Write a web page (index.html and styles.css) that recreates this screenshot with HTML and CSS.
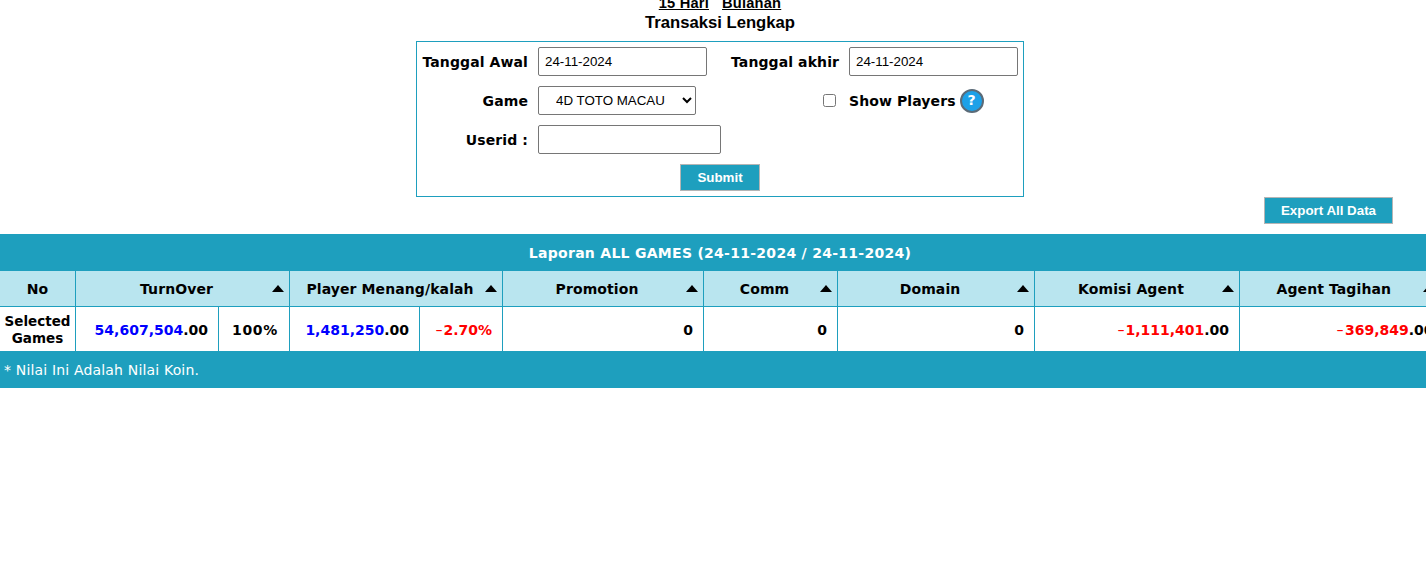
FILE: index.html
```html
<!DOCTYPE html>
<html>
<head>
<meta charset="utf-8">
<title>Transaksi Lengkap</title>
<link rel="stylesheet" href="styles.css">
</head>
<body>
<div class="links"><a href="#">15 Hari</a><a href="#">Bulanan</a></div>
<div class="title">Transaksi Lengkap</div>
<form class="filter">
  <div class="row">
    <label class="lbl">Tanggal Awal</label>
    <input class="field date" type="text" value="24-11-2024">
    <label class="lbl lbl2">Tanggal akhir</label>
    <input class="field date" type="text" value="24-11-2024">
  </div>
  <div class="row">
    <label class="lbl">Game</label>
    <select class="field game"><option>4D TOTO MACAU</option></select>
    <input class="check" type="checkbox">
    <label class="lbl show">Show Players</label>
    <span class="help">?</span>
  </div>
  <div class="row">
    <label class="lbl">Userid :</label>
    <input class="field user" type="text">
  </div>
  <div class="submit-row"><button class="btn submit" type="button">Submit</button></div>
</form>
<div class="export-row"><button class="btn export" type="button">Export All Data</button></div>
<div class="report">
  <div class="band head-band">Laporan ALL GAMES (24-11-2024 / 24-11-2024)</div>
  <table>
    <colgroup>
      <col class="c1"><col class="c2"><col class="c3"><col class="c4"><col class="c5"><col class="c6"><col class="c7"><col class="c8"><col class="c9"><col class="c10">
    </colgroup>
    <thead>
      <tr>
        <th class="plain">No</th>
        <th colspan="2" class="sort">TurnOver<i></i></th>
        <th colspan="2" class="sort">Player Menang/kalah<i></i></th>
        <th class="sort">Promotion<i></i></th>
        <th class="sort">Comm<i></i></th>
        <th class="sort">Domain<i></i></th>
        <th class="sort">Komisi Agent<i></i></th>
        <th class="sort">Agent Tagihan<i></i></th>
      </tr>
    </thead>
    <tbody>
      <tr>
        <td class="name">Selected Games</td>
        <td><span class="blue">54,607,504</span>.00</td>
        <td class="pct">100%</td>
        <td><span class="blue">1,481,250</span>.00</td>
        <td><span class="red"><span class="minus">-</span>2.70%</span></td>
        <td>0</td>
        <td>0</td>
        <td>0</td>
        <td><span class="red"><span class="minus">-</span>1,111,401</span>.00</td>
        <td class="last"><span class="red"><span class="minus">-</span>369,849</span>.00</td>
      </tr>
    </tbody>
  </table>
  <div class="band foot-band">* Nilai Ini Adalah Nilai Koin.</div>
</div>
</body>
</html>
```
FILE: styles.css
```css
html, body { margin: 0; padding: 0; background: #fff; }
html { width: 1426px; height: 567px; overflow: hidden; }
body { width: 1440px; height: 567px; font-family: "DejaVu Sans", Verdana, sans-serif; color: #000; }

.links { display: flex; justify-content: center; gap: 13px; height: 11px; align-items: flex-end; font: bold 14.67px/16px "Liberation Sans", Arial, sans-serif; letter-spacing: 0.2px; }
.links a { color: #000; }
.title { margin-top: 3px; height: 27px; text-align: center; font: bold 16.67px/18px "Liberation Sans", Arial, sans-serif; }

.filter { box-sizing: border-box; width: 608px; height: 156px; margin-left: 416px; border: 1px solid #1e9fbe; padding: 5px 5px 0; }
.row { display: flex; align-items: center; height: 29px; margin-bottom: 10px; }
.lbl { font-weight: bold; font-size: 14px; letter-spacing: 0.1px; white-space: nowrap; text-align: right; width: 106px; flex: none; }
.lbl2 { width: 108px; margin-left: 24px; }
.field { box-sizing: border-box; height: 29px; margin-left: 10px; border: 1px solid #767676; border-radius: 2px; background: #fff; color: #000; font: 13.33px "Liberation Sans", Arial, sans-serif; }
.date { width: 169px; padding: 0 6px; }
.game { width: 158px; padding-left: 13px; }
.user { width: 183px; padding: 0 6px; }
.check { width: 13px; height: 13px; margin: 0 0 0 127px; flex: none; }
.show { width: auto; margin-left: 13px; }
.help { flex: none; box-sizing: border-box; width: 24px; height: 24px; margin-left: 4px; border: 2px solid #5b6b78; border-radius: 50%; background: #1da1e8; color: #fff; font: bold 14px/19px "DejaVu Sans", sans-serif; text-align: center; }
.submit-row { display: flex; justify-content: center; }

.btn { box-sizing: border-box; height: 27px; padding: 0; border: 1px solid #b5b5b5; background: #1e9fbe; color: #fff; font: bold 13.33px "Liberation Sans", Arial, sans-serif; }
.submit { width: 80px; }
.export-row { display: flex; justify-content: flex-end; padding-right: 47px; height: 37px; }
.export { width: 129px; }

.report { width: 1440px; }
.band { background: #1e9fbe; color: #fff; height: 37px; line-height: 38px; font-size: 14px; }
.head-band { text-align: center; font-weight: bold; letter-spacing: 0.28px; }
.foot-band { padding-left: 4px; letter-spacing: 0.17px; }

table { table-layout: fixed; width: 1440px; border-collapse: collapse; font-size: 14px; }
.c1 { width: 75.5px; } .c2 { width: 143px; } .c3 { width: 71px; } .c4 { width: 130px; } .c5 { width: 83px; }
.c6 { width: 201px; } .c7 { width: 134px; } .c8 { width: 197px; } .c9 { width: 205px; } .c10 { width: 200.5px; }
th, td { border: 1px solid #1e9fbe; padding: 0; font-size: 14px; box-sizing: border-box; }
th { height: 35px; border-top: 0; background: #b9e5ef; font-weight: bold; text-align: center; position: relative; padding: 2px 12px 0 0; letter-spacing: 0.1px; }
th.plain { padding-right: 0; }
th:first-child, td:first-child { border-left: 0; }
th.sort i { position: absolute; right: 5px; top: 14px; width: 0; height: 0; border-left: 6.5px solid transparent; border-right: 6.5px solid transparent; border-bottom: 7px solid #000; }
td { height: 45px; border-bottom: 0; font-weight: bold; text-align: right; padding: 3px 10px 0 0; }
td.name { text-align: center; padding: 3px 0 0; line-height: 17px; font-size: 13.5px; }
td.pct { padding-right: 11px; letter-spacing: 0.7px; }
td.last { padding-right: 6px; }
.blue { color: #00f; }
.red { color: #f00; }
.minus { display: inline-block; font-weight: normal; letter-spacing: 1.5px; transform: scaleX(1.5); }
```
